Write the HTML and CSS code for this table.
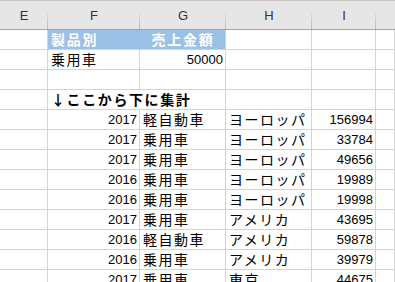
FILE: index.html
```html
<!DOCTYPE html>
<html lang="ja">
<head>
    <meta charset="UTF-8">
    <meta name="viewport" content="width=device-width, initial-scale=1.0">
    <title>集計シート</title>
    <link rel="stylesheet" href="styles.css">
</head>
<body>
    <div class="sheet">
        <!-- column letters -->
        <div class="col-head">E</div>
        <div class="col-head">F</div>
        <div class="col-head">G</div>
        <div class="col-head">H</div>
        <div class="col-head">I</div>
        <div class="col-head last"></div>

        <!-- lookup table -->
        <div class="cell"></div>
        <div class="cell label">製品別</div>
        <div class="cell label center">売上金額</div>
        <div class="cell"></div>
        <div class="cell"></div>
        <div class="cell"></div>

        <div class="cell"></div>
        <div class="cell jp">乗用車</div>
        <div class="cell num">50000</div>
        <div class="cell"></div>
        <div class="cell"></div>
        <div class="cell"></div>

        <div class="cell"></div>
        <div class="cell"></div>
        <div class="cell"></div>
        <div class="cell"></div>
        <div class="cell"></div>
        <div class="cell"></div>

        <div class="cell"></div>
        <div class="cell jp title wide">↓ここから下に集計</div>
        <div class="cell"></div>
        <div class="cell"></div>
        <div class="cell"></div>

        <!-- data rows -->
        <div class="cell"></div><div class="cell num">2017</div><div class="cell jp">軽自動車</div><div class="cell jp">ヨーロッパ</div><div class="cell num">156994</div><div class="cell"></div>
        <div class="cell"></div><div class="cell num">2017</div><div class="cell jp">乗用車</div><div class="cell jp">ヨーロッパ</div><div class="cell num">33784</div><div class="cell"></div>
        <div class="cell"></div><div class="cell num">2017</div><div class="cell jp">乗用車</div><div class="cell jp">ヨーロッパ</div><div class="cell num">49656</div><div class="cell"></div>
        <div class="cell"></div><div class="cell num">2016</div><div class="cell jp">乗用車</div><div class="cell jp">ヨーロッパ</div><div class="cell num">19989</div><div class="cell"></div>
        <div class="cell"></div><div class="cell num">2016</div><div class="cell jp">乗用車</div><div class="cell jp">ヨーロッパ</div><div class="cell num">19998</div><div class="cell"></div>
        <div class="cell"></div><div class="cell num">2017</div><div class="cell jp">乗用車</div><div class="cell jp">アメリカ</div><div class="cell num">43695</div><div class="cell"></div>
        <div class="cell"></div><div class="cell num">2016</div><div class="cell jp">軽自動車</div><div class="cell jp">アメリカ</div><div class="cell num">59878</div><div class="cell"></div>
        <div class="cell"></div><div class="cell num">2016</div><div class="cell jp">乗用車</div><div class="cell jp">アメリカ</div><div class="cell num">39979</div><div class="cell"></div>
        <div class="cell"></div><div class="cell num">2017</div><div class="cell jp">乗用車</div><div class="cell jp">東京</div><div class="cell num">44675</div><div class="cell"></div>
    </div>
</body>
</html>
```

FILE: styles.css
```css
body {
    margin: 0;
    padding: 0;
    background: #fff;
    overflow: hidden;
    font-family: "Liberation Sans", Arial, sans-serif;
}
.sheet {
    display: grid;
    grid-template-columns: 48px 92px 86px 86px 64px 1fr;
    grid-template-rows: 30px;
    grid-auto-rows: 20px;
    width: 395px;
}
/* header separators fade in towards the bottom edge */
.col-head {
    box-sizing: border-box;
    background: linear-gradient(to bottom, #e6e6e6 30%, #b8b8b8) right / 1px 100% no-repeat, #e6e6e6;
    border-top: 1px solid #c4c4c4;
    border-bottom: 1px solid #a3a3a3;
    font-size: 13px;
    color: #333;
    display: flex;
    align-items: flex-end;
    justify-content: center;
    padding-bottom: 6px;
}
.col-head.last {
    background: #e6e6e6;
}
.cell {
    box-sizing: border-box;
    border-right: 1px solid #d4d4d4;
    border-bottom: 1px solid #d4d4d4;
    display: flex;
    align-items: flex-end;
    padding: 0 2px 2px 3px;
    font-size: 13px;
    line-height: 15px;
    color: #000;
    white-space: nowrap;
}
.jp {
    font-family: "Noto Sans CJK JP", sans-serif;
    font-size: 14px;
    letter-spacing: 1.5px;
}
.num {
    justify-content: flex-end;
}
.label {
    background: #9bc2e6;
    border-right-color: #9bc2e6;
    color: #fff;
    font-family: "Noto Sans CJK JP", sans-serif;
    font-size: 14px;
    font-weight: bold;
    letter-spacing: 1.8px;
}
.center {
    justify-content: center;
    border-right-color: #d4d4d4;
}
.title {
    font-weight: bold;
    letter-spacing: 1.6px;
}
.wide {
    grid-column: span 2;
}
```
